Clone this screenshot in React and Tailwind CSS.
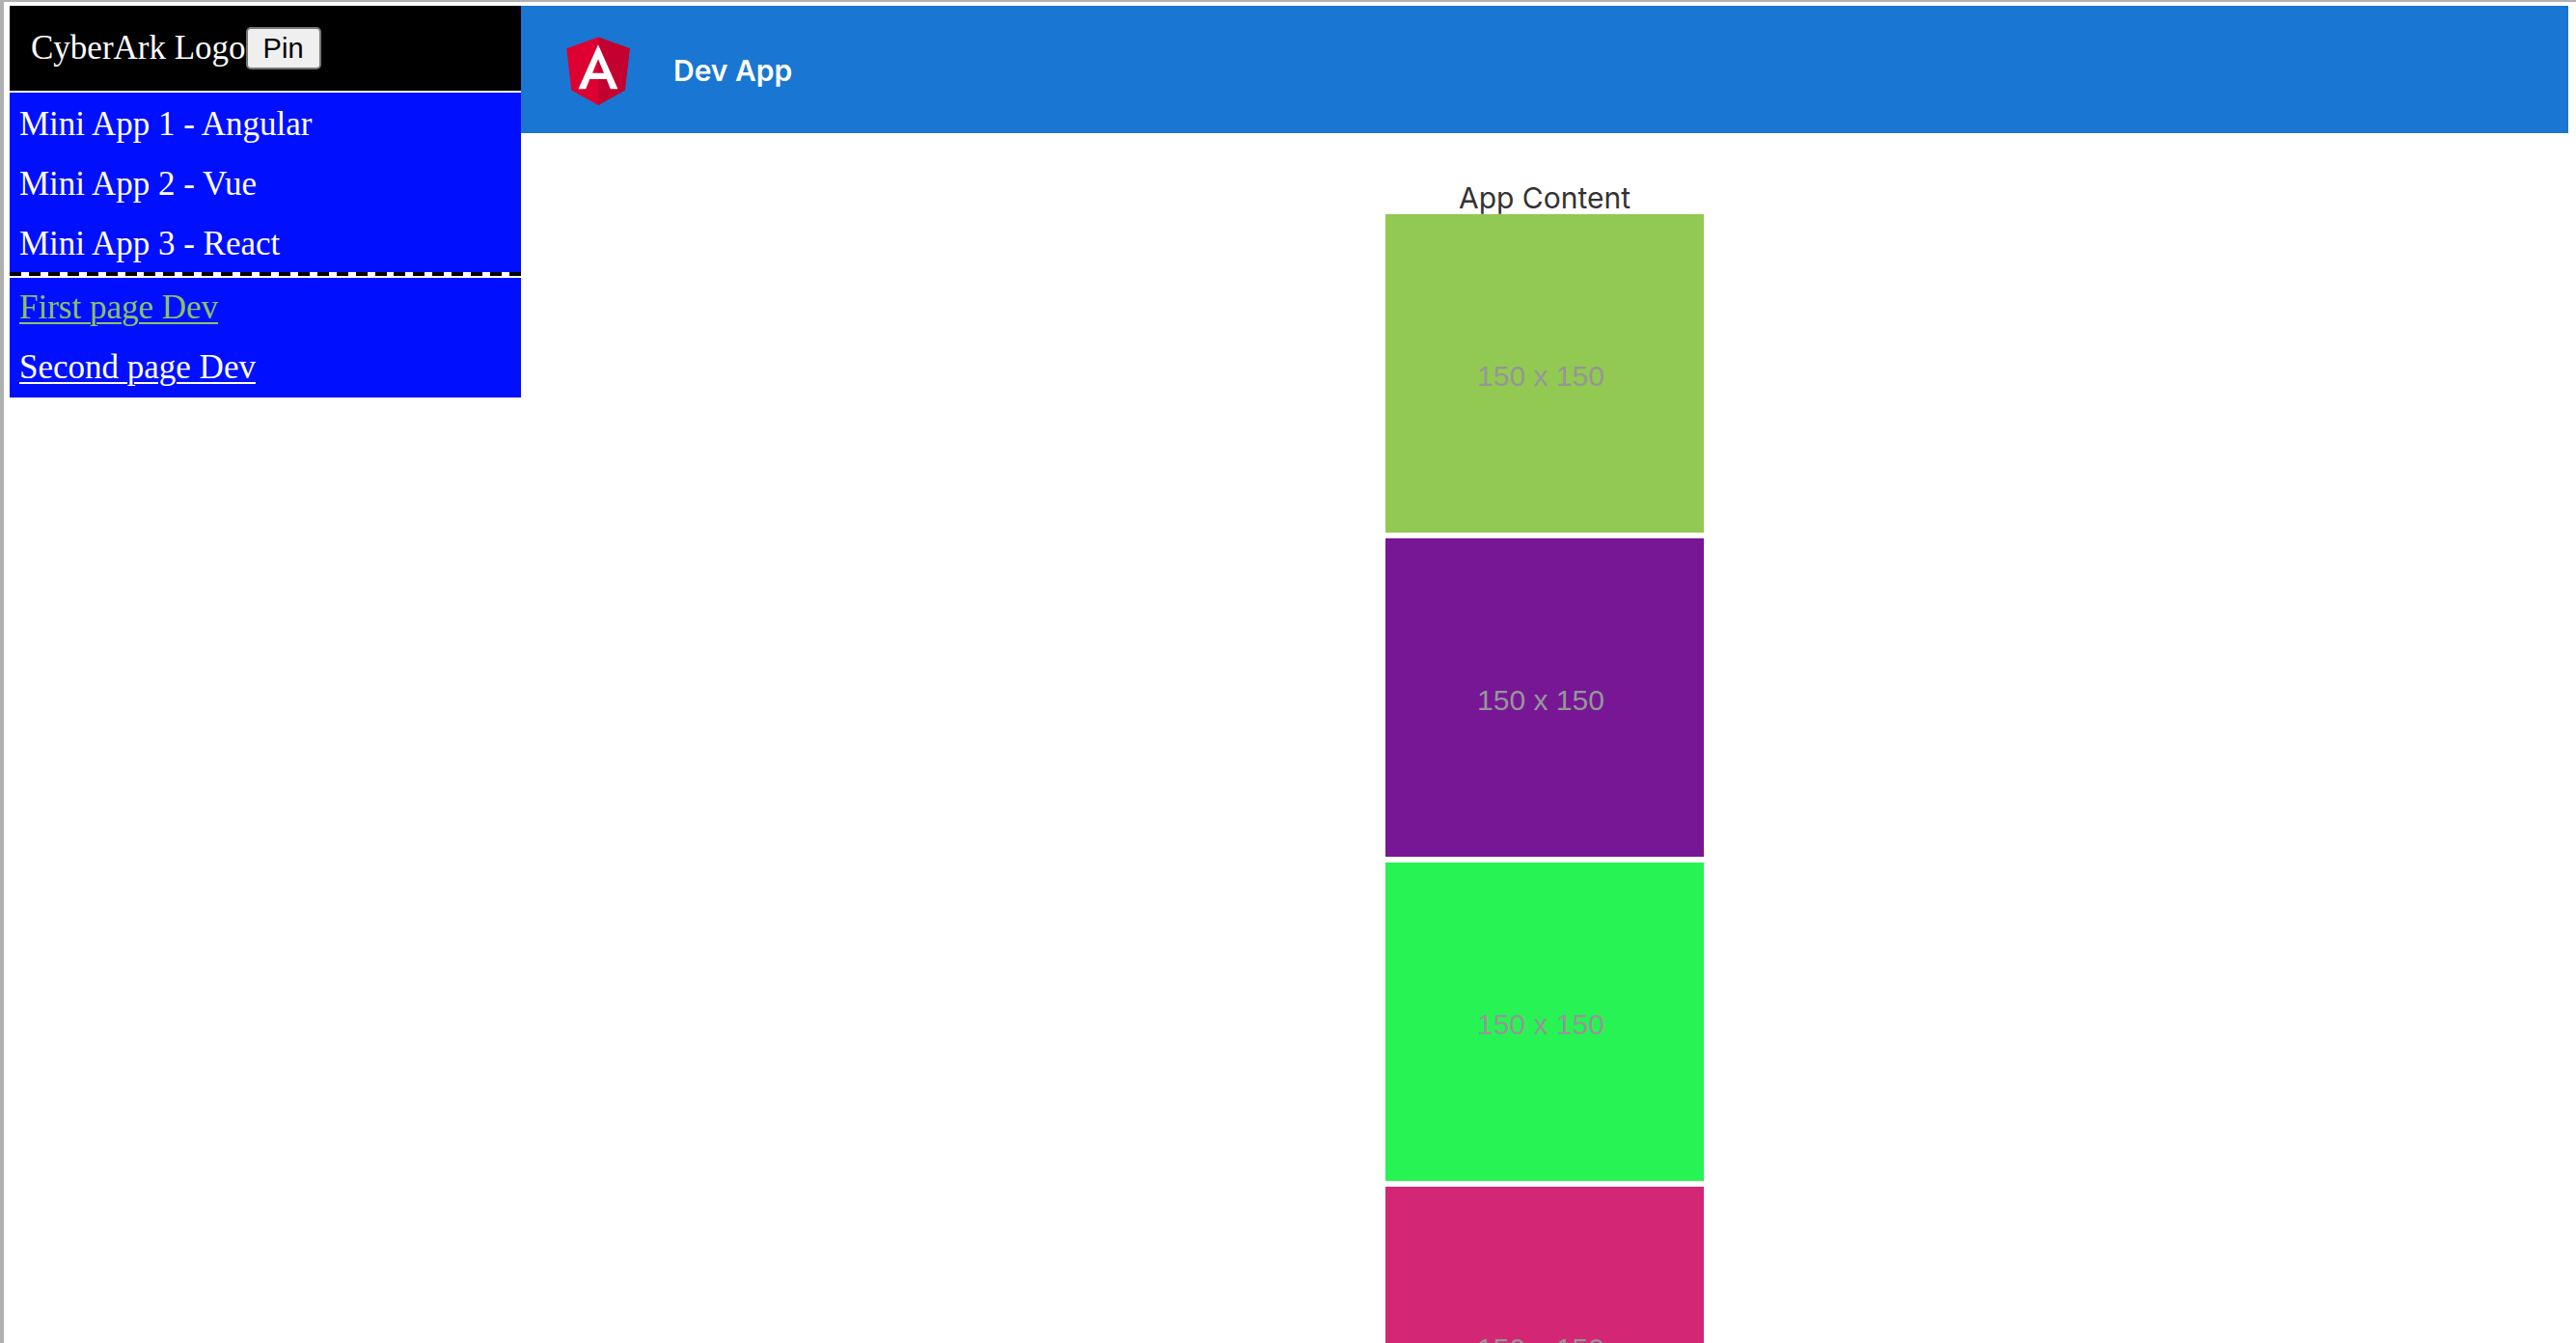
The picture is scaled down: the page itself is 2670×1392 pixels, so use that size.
const miniApps = ["Mini App 1 - Angular", "Mini App 2 - Vue", "Mini App 3 - React"];

const pages = [
  { label: "First page Dev", href: "#first", color: "text-[#8bc068]" },
  { label: "Second page Dev", href: "#second", color: "text-white" },
];

const placeholders = ["bg-[#92c952]", "bg-[#771796]", "bg-[#27f454]", "bg-[#d32776]"];

function AngularLogo() {
  return (
    <svg className="size-22 shrink-0" viewBox="0 0 250 250" role="img" aria-label="Angular Logo">
      <path fill="#dd0031" d="M125 30L31.9 63.2l14.2 123.1L125 230l78.9-43.7 14.2-123.1z" />
      <path fill="#c3002f" d="M125 30v22.2-.1V230l78.9-43.7 14.2-123.1L125 30z" />
      <path
        fill="#fff"
        d="M125 52.1L66.8 182.6h21.7l11.7-29.2h49.4l11.7 29.2H183L125 52.1zm17 83.3h-34l17-40.9 17 40.9z"
      />
    </svg>
  );
}

function DashedDivider() {
  return (
    <div className="flex h-1 justify-between bg-white" aria-hidden="true">
      {Array.from({ length: 27 }, (_, i) => (
        <span key={i} className="w-3 bg-black" />
      ))}
    </div>
  );
}

function Sidebar() {
  return (
    <aside className="w-[530px] shrink-0 self-start font-['Liberation_Serif',serif] text-[35px] leading-[62px] text-white">
      <div className="flex h-[88px] items-center bg-black px-[22px]">
        <span>CyberArk Logo</span>
        <button
          type="button"
          className="h-11 rounded-[5px] border-2 border-[#767676] bg-[#efefef] px-4 font-['Liberation_Sans',sans-serif] text-[29px] leading-9 text-black"
        >
          Pin
        </button>
      </div>
      <ul className="mt-0.5 bg-[#0010ff]">
        {miniApps.map((name) => (
          <li key={name} className="px-2.5 pt-1 leading-[58px]">
            {name}
          </li>
        ))}
      </ul>
      <DashedDivider />
      <nav className="mt-0.5 flex flex-col bg-[#0010ff]">
        {pages.map((page) => (
          <a
            key={page.label}
            href={page.href}
            className={`px-2.5 underline decoration-2 underline-offset-4 ${page.color}`}
          >
            {page.label}
          </a>
        ))}
      </nav>
    </aside>
  );
}

export default function App() {
  return (
    <div className="flex h-screen overflow-hidden border-t-2 border-l-4 border-[#b0b0b0] bg-white pt-1 pr-2 pl-1.5">
      <Sidebar />
      <div className="min-w-0 flex-1 font-['Inter',sans-serif] text-[30px] leading-9">
        <header className="flex h-[132px] items-center gap-[34px] bg-[#1976d2] px-9 font-semibold text-white">
          <AngularLogo />
          <span className="pt-0.5">Dev App</span>
        </header>
        <main className="flex flex-col items-center pt-[50px] text-[#333]">
          <p className="leading-[34px]">App Content</p>
          <div className="flex flex-col gap-1.5">
            {placeholders.map((color) => (
              <div
                key={color}
                className={`flex size-[330px] items-center justify-center pt-1.5 pr-2 font-['Liberation_Sans',sans-serif] text-[30px] text-[#969696] ${color}`}
              >
                150 x 150
              </div>
            ))}
          </div>
        </main>
      </div>
    </div>
  );
}
